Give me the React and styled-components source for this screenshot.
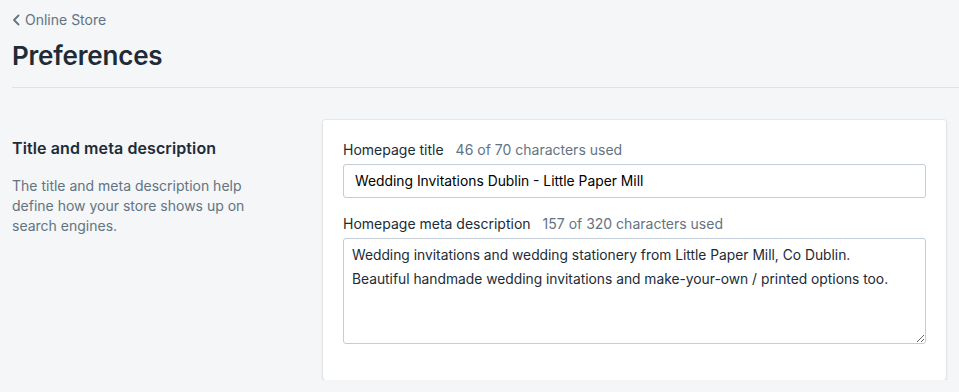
import React from "react";
import styled, { createGlobalStyle } from "styled-components";

const Global = createGlobalStyle`
  html, body { margin: 0; padding: 0; background: #f4f6f8; }
  body { font-family: Inter, "Noto Sans", sans-serif; color: #212b36; -webkit-font-smoothing: antialiased; }
  * { box-sizing: border-box; }
`;

const Page = styled.div`
  padding: 10px 13px 0 12px;
`;

const Breadcrumb = styled.a`
  display: inline-flex;
  align-items: center;
  gap: 5px;
  font-size: 14px;
  line-height: 20px;
  color: #637381;
  text-decoration: none;
  svg { display: block; }
`;

const Title = styled.h1`
  margin: 10px 0 0;
  font-size: 26px;
  line-height: 32px;
  font-weight: 600;
  color: #212b36;
  letter-spacing: -0.2px;
`;

const Divider = styled.hr`
  margin: 15px -13px 0 0;
  border: 0;
  border-top: 1px solid #dfe3e8;
`;

const Section = styled.section`
  display: grid;
  grid-template-columns: 290px 1fr;
  gap: 20px;
  margin-top: 32px;
`;

const Aside = styled.div`
  padding-top: 16px;
`;

const AsideHeading = styled.h2`
  margin: 0;
  font-size: 16px;
  line-height: 24px;
  font-weight: 600;
  color: #212b36;
  letter-spacing: 0.1px;
`;

const AsideText = styled.p`
  margin: 16px 0 0;
  font-size: 14px;
  line-height: 20px;
  color: #637381;
  max-width: 250px;
`;

const Card = styled.div`
  margin-left: 1px;
  background: #fff;
  border-radius: 3px;
  box-shadow: 0 0 0 1px rgba(63, 63, 68, 0.05), 0 1px 3px 0 rgba(63, 63, 68, 0.15);
  padding: 20px 20px 36px;
  display: flex;
  flex-direction: column;
  gap: 16px;
`;

const Field = styled.div`
  display: flex;
  flex-direction: column;
  gap: 4px;
`;

const Label = styled.label`
  font-size: 14px;
  line-height: 20px;
  color: #212b36;
  display: flex;
  gap: 12px;
`;

const Count = styled.span`
  color: #637381;
`;

const Input = styled.input`
  height: 34px;
  width: 100%;
  border: 1px solid #c4cdd5;
  border-radius: 3px;
  padding: 0 11px;
  font: inherit;
  font-size: 13.85px;
  color: #000;
  background: #fff;
  outline: none;
`;

const TextArea = styled.textarea`
  height: 106px;
  width: 100%;
  border: 1px solid #c4cdd5;
  border-radius: 3px;
  padding: 4px 8px;
  font: inherit;
  font-size: 13.8px;
  line-height: 24px;
  color: #212b36;
  background: #fff;
  outline: none;
  resize: vertical;
`;

export default function App() {
  return (
    <>
      <Global />
      <Page>
        <Breadcrumb href="#">
          <svg width="8" height="12" viewBox="0 0 8 12">
            <path d="M6.5 1.5 L2 6 L6.5 10.5" fill="none" stroke="#637381" strokeWidth="1.8" strokeLinecap="round" strokeLinejoin="round" />
          </svg>
          Online Store
        </Breadcrumb>
        <Title>Preferences</Title>
        <Divider />
        <Section>
          <Aside>
            <AsideHeading>Title and meta description</AsideHeading>
            <AsideText>
              The title and meta description help define how your store shows up on search engines.
            </AsideText>
          </Aside>
          <Card>
            <Field>
              <Label>
                Homepage title <Count>46 of 70 characters used</Count>
              </Label>
              <Input defaultValue="Wedding Invitations Dublin - Little Paper Mill" />
            </Field>
            <Field>
              <Label>
                Homepage meta description <Count>157 of 320 characters used</Count>
              </Label>
              <TextArea defaultValue={"Wedding invitations and wedding stationery from Little Paper Mill, Co Dublin.\nBeautiful handmade wedding invitations and make-your-own / printed options too."} />
            </Field>
          </Card>
        </Section>
      </Page>
    </>
  );
}
